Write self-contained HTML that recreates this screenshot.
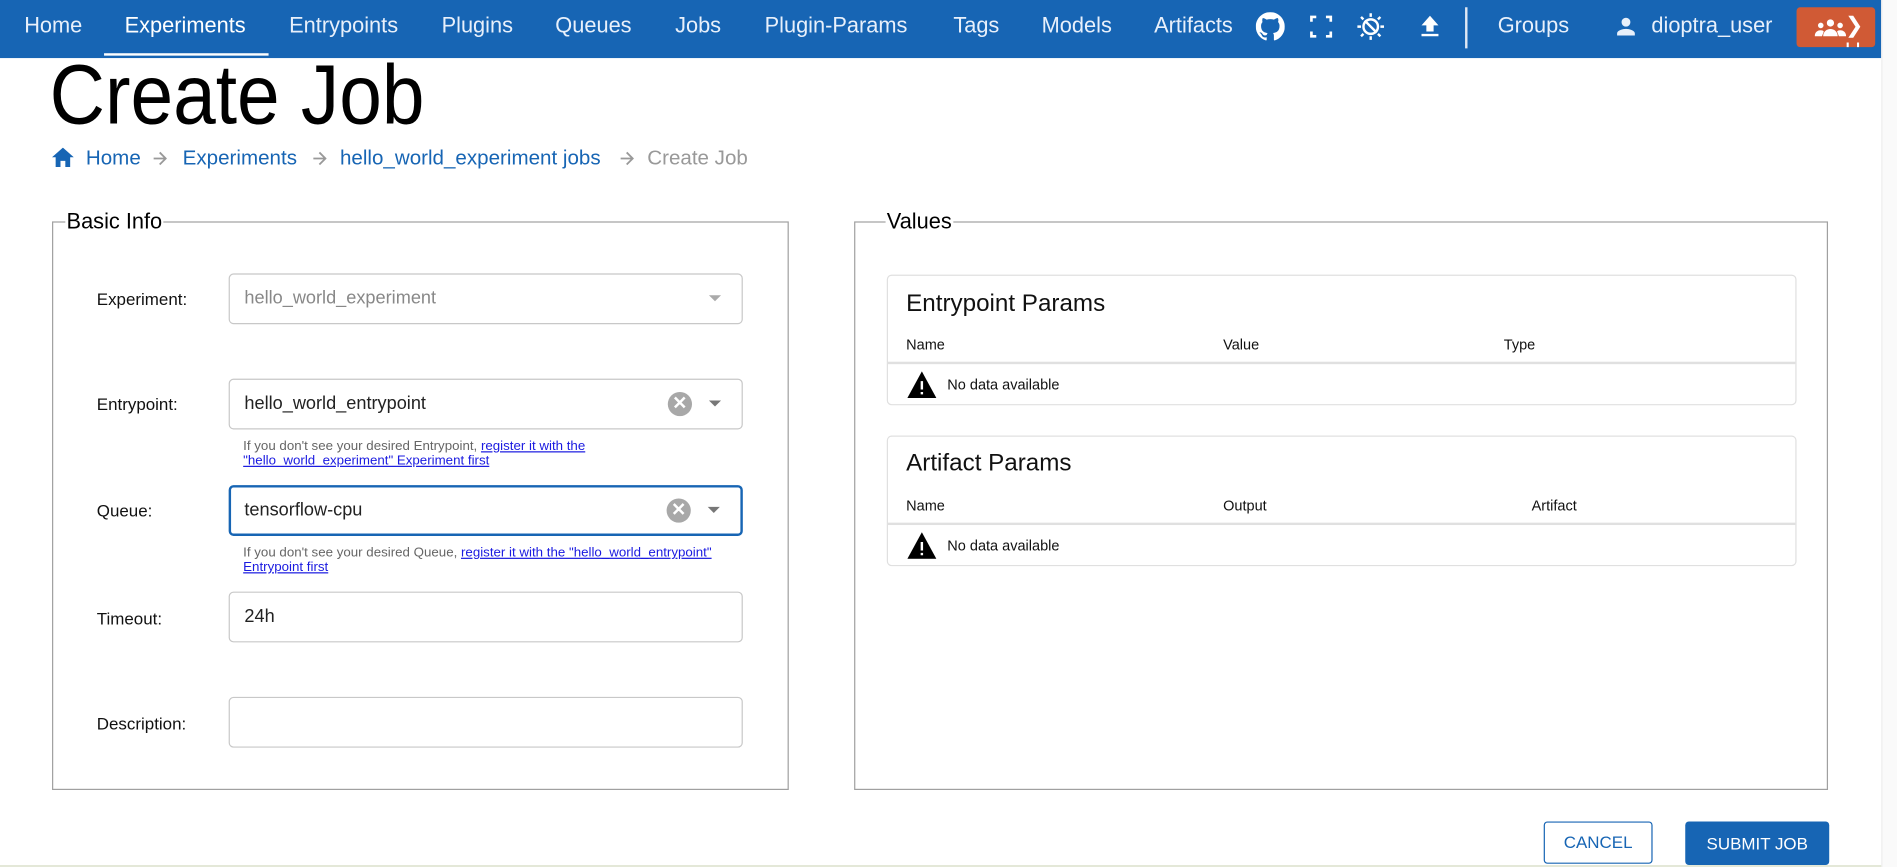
<!DOCTYPE html>
<html><head><meta charset="utf-8"><style>
html,body{margin:0;padding:0;width:1897px;height:867px;overflow:hidden;background:#fff;font-family:"Liberation Sans",Arial,sans-serif;}
#w{position:absolute;left:0;top:0;width:1568px;height:717px;transform:scale(1.2098);transform-origin:0 0;}
.a{position:absolute;white-space:nowrap;}
.nav{position:absolute;left:0;top:0;width:1555px;height:48px;background:#1765b4;}
.nav .a{color:#e8f0fb;font-size:18px;top:11px;}
.fs{position:absolute;border:1px solid #a0a0a0;}
.lg{position:absolute;top:-11px;background:#fff;font-size:18px;padding:0 1px;}
.lbl{font-size:14px;color:#111;}
.inp{position:absolute;left:189px;width:423px;height:40px;border:1px solid #c8c8c8;border-radius:4px;background:#fff;}
.inp span{position:absolute;left:12px;top:11px;font-size:15px;color:#222;}
.arr{position:absolute;right:17px;top:17px;width:0;height:0;border-left:5px solid transparent;border-right:5px solid transparent;border-top:5px solid #777;}
.clr{position:absolute;right:41px;top:10px;width:20px;height:20px;border-radius:50%;background:#a8a8a8;color:#fff;font-size:15px;line-height:20px;text-align:center;font-weight:bold;}
.help{position:absolute;left:201px;font-size:11px;color:#666;line-height:12px;}
.help u{color:#1a1ae0;}
.card{position:absolute;left:733px;width:750px;border:1px solid #e0e0e0;border-radius:4px;}
.card .t{position:absolute;left:15px;font-size:20px;color:#111;}
.card .h{position:absolute;font-size:12px;color:#111;}
.card .dv{position:absolute;left:0;width:750px;height:2px;background:#e0e0e0;}
.nd{position:absolute;left:16px;font-size:12px;color:#111;}
.bc{position:absolute;top:121px;font-size:17px;color:#1765b4;white-space:nowrap;}
.ar{position:absolute;top:125px;}
</style></head><body><div id="w">
<div class="nav">
<div class="a" style="left:20px">Home</div>
<div class="a" style="left:103px;color:#fff">Experiments</div>
<div style="position:absolute;left:86px;top:44px;width:136px;height:2px;background:#fff"></div>
<div class="a" style="left:239px">Entrypoints</div>
<div class="a" style="left:365px">Plugins</div>
<div class="a" style="left:459px">Queues</div>
<div class="a" style="left:558px">Jobs</div>
<div class="a" style="left:632px">Plugin-Params</div>
<div class="a" style="left:788px">Tags</div>
<div class="a" style="left:861px">Models</div>
<div class="a" style="left:954px">Artifacts</div>
<svg style="position:absolute;left:1038px;top:10px" width="24" height="24" viewBox="0 0 16 16"><path fill="#fff" d="M8 0C3.58 0 0 3.58 0 8c0 3.54 2.29 6.53 5.47 7.59.4.07.55-.17.55-.38v-1.33c-2.23.48-2.7-1.07-2.7-1.07-.36-.92-.89-1.17-.89-1.17-.73-.5.05-.49.05-.49.8.06 1.23.83 1.230.83.72 1.22 1.870.87 2.330.66.07-.52.28-.87.51-1.07-1.78-.2-3.640-.89-3.64-3.95 0-.87.31-1.59.82-2.150-.08-.2-.36-1.02.08-2.12 0 0 .67-.21 2.2.82A7.6 7.6 0 018 3.870c.68 0 1.36.09 2 .27 1.53-1.04 2.2-.82 2.2-.82.44 1.1.16 1.92.08 2.12.51.56.82 1.27.82 2.15 0 3.07-1.87 3.75-3.65 3.95.29.25.54.73.54 1.48v2.2c0 .21.15.46.55.38A8 8 0 0016 8c0-4.42-3.58-8-8-8z"/></svg>
<svg style="position:absolute;left:1082px;top:12px" width="20" height="20" viewBox="0 0 20 20" fill="none" stroke="#fff" stroke-width="2.2"><path d="M2 6V2h4M14 2h4v4M18 14v4h-4M6 18H2v-4"/></svg>
<svg style="position:absolute;left:1120px;top:9px" width="26" height="26" viewBox="0 0 26 26" fill="none" stroke="#fff" stroke-width="2"><circle cx="13" cy="13" r="6"/><path d="M13 2v3M13 21v3M2 13h3M21 13h3M5 5l2 2M19 19l2 2M5 21l2-2M19 7l2-2M8 8l10 10"/></svg>
<svg style="position:absolute;left:1173px;top:12px" width="18" height="20" viewBox="0 0 18 20"><path fill="#fff" d="M9 1l7 8h-4v5H6V9H2zM2 16h14v2H2z"/></svg>
<div style="position:absolute;left:1211px;top:6px;width:2px;height:34px;background:#e0e8f4"></div>
<div class="a" style="left:1238px">Groups</div>
<svg style="position:absolute;left:1333px;top:11px" width="22" height="22" viewBox="0 0 24 24"><path fill="#e8f0fb" d="M12 12a4 4 0 100-8 4 4 0 000 8zm0 2c-2.7 0-8 1.3-8 4v2h16v-2c0-2.7-5.3-4-8-4z"/></svg>
<div class="a" style="left:1365px">dioptra_user</div>
<div style="position:absolute;left:1485px;top:6px;width:65px;height:33px;background:#d05a35;border-radius:3px;overflow:hidden">
<svg style="position:absolute;left:15px;top:9px" width="26" height="16" viewBox="0 0 26 16"><circle cx="13" cy="4" r="3" fill="#fff"/><circle cx="5" cy="6" r="2.3" fill="#fff"/><circle cx="21" cy="6" r="2.3" fill="#fff"/><path fill="#fff" d="M7 15c0-4 3-6 6-6s6 2 6 6zM0 15c0-3 2-5 5-5 1 0 2 .3 2.5 1L6 15zM26 15c0-3-2-5-5-5-1 0-2 .3-2.5 1L20 15z"/></svg>
<div style="position:absolute;left:40px;top:5px;color:#fff;font-size:18px">❯U</div></div>
</div>
<div style="position:absolute;left:1555px;top:0;width:13px;height:717px;background:#fafafa;border-left:1px solid #eee"></div>
<div class="a" style="left:41px;top:38px;font-size:70px;color:#000;line-height:80px;transform:scaleX(0.905);transform-origin:0 0">Create Job</div>
<svg style="position:absolute;left:43px;top:122px" width="18" height="16" viewBox="0 0 18 16"><path fill="#1765b4" d="M9 0l9 8h-3v8h-4v-5H7v5H3V8H0z"/></svg>
<div class="bc" style="left:71px">Home</div>
<svg class="ar" style="left:126px" width="12" height="12" viewBox="0 0 12 12" fill="none" stroke="#999" stroke-width="1.5"><path d="M1 6h10M6 1l5 5-5 5"/></svg>
<div class="bc" style="left:151px">Experiments</div>
<svg class="ar" style="left:258px" width="12" height="12" viewBox="0 0 12 12" fill="none" stroke="#999" stroke-width="1.5"><path d="M1 6h10M6 1l5 5-5 5"/></svg>
<div class="bc" style="left:281px">hello_world_experiment jobs</div>
<svg class="ar" style="left:512px" width="12" height="12" viewBox="0 0 12 12" fill="none" stroke="#999" stroke-width="1.5"><path d="M1 6h10M6 1l5 5-5 5"/></svg>
<div class="bc" style="left:535px;color:#999">Create Job</div>

<div class="fs" style="left:43px;top:183px;width:607px;height:468px">
<div class="lg" style="left:10px">Basic Info</div></div>
<div class="a lbl" style="left:80px;top:239px">Experiment:</div>
<div class="inp" style="top:226px"><span style="color:#888">hello_world_experiment</span><div class="arr" style="border-top-color:#aaa"></div></div>
<div class="a lbl" style="left:80px;top:326px">Entrypoint:</div>
<div class="inp" style="top:313px"><span>hello_world_entrypoint</span><div class="clr">✕</div><div class="arr"></div></div>
<div class="help" style="top:363px">If you don't see your desired Entrypoint, <u>register it with the</u><br><u>"hello_world_experiment" Experiment first</u></div>
<div class="a lbl" style="left:80px;top:414px">Queue:</div>
<div class="inp" style="top:401px;border:2px solid #1765b4;width:421px;height:38px"><span style="left:11px;top:10px">tensorflow-cpu</span><div class="clr" style="top:9px">✕</div><div class="arr" style="top:16px"></div></div>
<div class="help" style="top:451px">If you don't see your desired Queue, <u>register it with the "hello_world_entrypoint"</u><br><u>Entrypoint first</u></div>
<div class="a lbl" style="left:80px;top:503px">Timeout:</div>
<div class="inp" style="top:489px"><span>24h</span></div>
<div class="a lbl" style="left:80px;top:590px">Description:</div>
<div class="inp" style="top:576px"></div>

<div class="fs" style="left:706px;top:183px;width:803px;height:468px">
<div class="lg" style="left:25px">Values</div></div>
<div class="card" style="top:227px;height:106px">
<div class="t" style="top:12px">Entrypoint Params</div>
<div class="h" style="left:15px;top:50px">Name</div><div class="h" style="left:277px;top:50px">Value</div><div class="h" style="left:509px;top:50px">Type</div>
<div class="dv" style="top:71px"></div>
<svg style="position:absolute;left:16px;top:79px" width="24" height="22" viewBox="0 0 24 22"><path d="M12 0L24 22H0z"/><path fill="#fff" d="M11 8h2v7h-2zM11 17h2v2h-2z"/></svg>
<div class="nd" style="left:49px;top:83px">No data available</div>
</div>
<div class="card" style="top:360px;height:106px">
<div class="t" style="top:11px">Artifact Params</div>
<div class="h" style="left:15px;top:50px">Name</div><div class="h" style="left:277px;top:50px">Output</div><div class="h" style="left:532px;top:50px">Artifact</div>
<div class="dv" style="top:71px"></div>
<svg style="position:absolute;left:16px;top:79px" width="24" height="22" viewBox="0 0 24 22"><path d="M12 0L24 22H0z"/><path fill="#fff" d="M11 8h2v7h-2zM11 17h2v2h-2z"/></svg>
<div class="nd" style="left:49px;top:83px">No data available</div>
</div>

<div style="position:absolute;left:1276px;top:679px;width:90px;height:35px;border:1px solid #1765b4;border-radius:3px;box-sizing:border-box;color:#1765b4;font-size:14px;text-align:center;line-height:33px">CANCEL</div>
<div style="position:absolute;left:1393px;top:679px;width:119px;height:36px;background:#1765b4;border-radius:3px;color:#fff;font-size:14px;text-align:center;line-height:36px">SUBMIT JOB</div>
<div style="position:absolute;left:0;top:715px;width:1555px;height:2px;background:#e4e8d8"></div>
</div></body></html>
